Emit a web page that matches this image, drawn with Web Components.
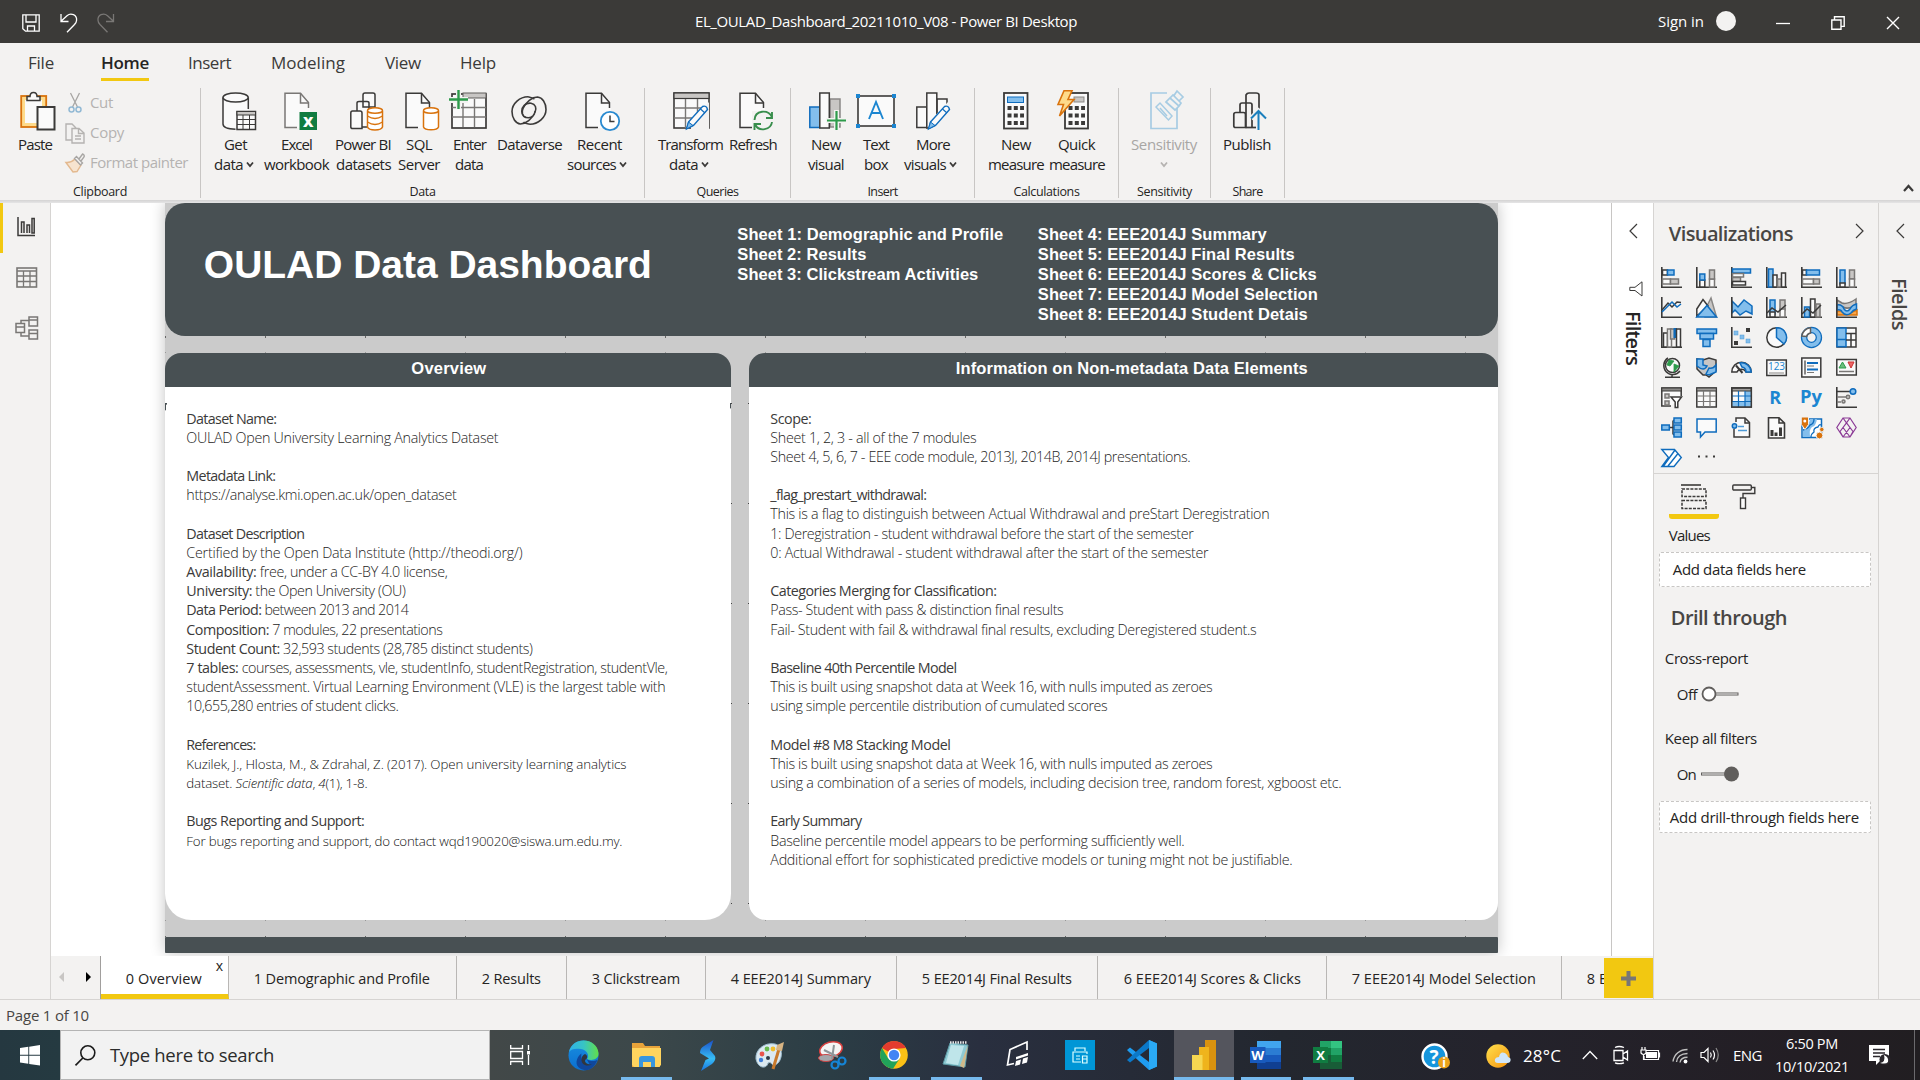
<!DOCTYPE html>
<html lang="en">
<head>
<meta charset="utf-8">
<title>EL_OULAD_Dashboard_20211010_V08 - Power BI Desktop</title>
<style>
html,body{margin:0;padding:0}
body{width:1920px;height:1080px;overflow:hidden;background:#f3f2f1;font:15px "Open Sans","Noto Sans",sans-serif;font-stretch:93%;color:#252423}
</style>
</head>
<body>
<power-bi-window></power-bi-window>
<script>
const K='#3b3a39',B='#83beec',S='#0f6cbd',G='#c8c6c4',W='#fafafa',O='#d9730d';
const r=(x,y,w,h,f='none',s='none',sw=1.5)=>`<rect x="${x}" y="${y}" width="${w}" height="${h}" fill="${f}" stroke="${s}" stroke-width="${sw}"/>`;
const p=(d,s=K,f='none',sw=1.5)=>`<path d="${d}" stroke="${s}" fill="${f}" stroke-width="${sw}"/>`;
const c=(x,y,q,f='none',s='none',sw=1.5)=>`<circle cx="${x}" cy="${y}" r="${q}" fill="${f}" stroke="${s}" stroke-width="${sw}"/>`;
const ax=p('M.8 0V20.2H21',K,'none',1.6);
const doc=(s=K)=>p('M1 1H17L26 10V36H1Z','none',W)+p('M24.5 16V10.5L16.5 1.2H1V35.5H13',s)+p('M16.5 1.2V11H25',s);
const pencil=(x,y)=>`<g transform="translate(${x} ${y})">`+p('M3 17L17 1.5Q21 0 22 4.5L8 20.5L1 24Z',S,W,1.4)+p('M3 17L7.5 20.5L1 24Z',S,B,1)+p('M15 4L19.5 8',S,'none',1.2)+'</g>';
/* glyph name -> [width, height, markup] */
const ICONS={
save:[18,18,p('M.8.8H17.2V17.2H3.5L.8 14.8ZM4 1V8H14V1M5.5 17V12H12.5V17','#fff','none',1.3)],
undo:[18,20,p('M1 1V8.5H8.5M1 8.3L7 2.7C11-.8 17 2 16.6 7.2C16.5 9 15.8 10 14.5 11.5L7 19.3','#fff','none',1.3)],
redo:[18,20,p('M16.5 1V8.5H9M16.5 8.3L10.5 2.7C6.500-.8.5 2 1 7.2C1 9 1.700 10 3 11.500L10.500 19.300','#797775','none',1.3)],
min:[14,14,p('M0 7.5H14','#fff','none',1.3)],
restore:[14,14,p('M.8 4H10V13.2H.8ZM3.5 3.800V.8H13.2V10.400H10.200','#fff','none',1.4)],
close:[14,14,p('M1 1L13 13M13 1L1 13','#fff','none',1.4)],
paste:[36,40,r(1.2,5,25,31,'#fedb8b',O,1.8)+r(5,9,17,23,W)+p('M7 9.500V5.500H10C10 0 17 0 17 5.500H20V9.500Z',K,W)+r(17.500,16,17,22.500,W,K,2)],
cut:[14,20,p('M2.500 0L9.500 14M11.500 0L4.500 14','#a8a6a4','none',1.300)+c(3.500,16.500,2.500,'none','#92b9d4',1.500)+c(10.500,16.500,2.500,'none','#92b9d4',1.500)],
copy:[20,21,p('M7 17H1V1H7L11 5M7 20V5.500H14L19 10V20ZM13.500 5.500V10.500H19M10 13H16M10 16H16','#b5b3b1','none',1.400)],
brush:[20,20,p('M10 6L16 12L12 18.500L8 19L1 9.500Q6 10 10 6Z','#e3b98f','#f7e4cf',1.400)+p('M9.500 5.500L11.500 3.500L17.500 10L15.500 12ZM14 6L17.500 1Q20 2 19 4L16 8','#a8a6a4','#f3f2f1',1.400)],
getdata:[35,39,p('M1 5.500V33C2 35.500 7 37.500 13.500 37.500L26 33V5.500Z','none',W)+p('M13.500 37.200C6 37 1 35 1 32V5.500M26.300 5.500V17')+`<ellipse cx="13.600" cy="5.500" rx="12.600" ry="4.500" fill="${W}" stroke="${K}" stroke-width="1.500"/>`+r(15,19.500,18.500,18,W,K)+r(15,19.500,18.500,3.500,G,K,1)+p('M15 27.500H33M15 32.500H33M21 23V37M27.500 23V37',K,'none',1)],
excel:[34,39,doc('#797775')+r(15.500,20,17.500,18,'#107c41')+`<text x="24.200" y="34.500" font-size="14.500" font-weight="800" fill="#fff" text-anchor="middle">X</text>`],
pbids:[34,39,p('M13 9.500V3Q13 1 15 1H23Q25 1 25 3V15H13ZM7 19V11Q7 9.500 9 9.500H17Q19 9.500 19 11V35H7Z',K,W)+p('M.8 21Q.8 19 2.500 19H10Q12 19 12 21V36.500H2.500Q.8 36.500 .8 35Z',K,W)+p('M17.500 19V35C19 39 31 39 32.500 35V19',O,'#fff')+`<ellipse cx="25" cy="18.500" rx="7.500" ry="2.800" fill="#fff" stroke="${O}" stroke-width="1.500"/>`+p('M17.500 24Q25 29 32.500 24M17.500 30Q25 35 32.500 30',O)],
sql:[35,39,doc()+p('M18.500 19V35C20 38.800 32 38.800 33.500 35V19',O,'#fff')+`<ellipse cx="26" cy="18.500" rx="7.500" ry="2.800" fill="#fff" stroke="${O}" stroke-width="1.500"/>`],
enter:[38,40,r(3,4,34,34,W,K,1.700)+r(14,3,23,5,G,'#605e5c',1)+p('M3 17.500H37M3 27H37M14 12V37M25.500 9V37','#797775','none',1.400)+r(0,7,19,6,'#f3f2f1')+r(7,0,5,19,'#f3f2f1')+p('M9.500 0V19M0 9.500H19','#2d9b4b','none',2.400)],
dataverse:[36,29,p('M17 .8C9 .8 1 7.500 1 15.500C1 22 4.500 27.500 9.500 28C15 28 21 23 24 16.500C26 12 24.500 8 20 7.200C14.500 6.500 10.500 11 10.800 15.500C11 19.500 14 21.800 17.500 21.800C21 21.800 24 19 24 15','#3b3a39','none',1.600)+p('M19 28.200C27 28.200 35 21.500 35 13.500C35 7 31.500 1.500 26.500 1C21 1 15 6 12 12.500C10.500 16 11 20.500 15 21.600M17 .8Q22 2 23.500 3M19 28.200Q14 27.500 12.500 26',K,'none',1.600)],
recent:[35,39,doc()+c(25,29,9.200,'#fff','#2a8ad0',1.800)+p('M25 23.500V29.500H29.500')],
transform:[39,39,r(1,1,35,35,W,K,1.600)+r(1,1,35,5.500,G,K,1.200)+p('M1 16H36M1 26H26M12.500 7V36M24.500 7V29','#797775','none',1.400)+p('M18 38L18 30L36 10V38Z','none','#f3f2f1')+pencil(12.500,13)],
refresh:[35,39,doc()+r(13,19,22,20,'#f3f2f1')+p('M15.500 28C16 18 29 17 33 25M33 20V26H27M33 30C32 38 20 40 16.500 33M15.500 38V32H22','#388e4c','none',1.900)],
newvis:[38,39,r(.8,15,10,20.500,B,S)+r(21,7,10,28,G,'#8a8886')+r(10.800,1,9.500,35,W,K)+r(17,26,19,5,'#f3f2f1')+r(25,18,5,20,'#f3f2f1')+p('M18 28.500H37M27.500 19V38','#2d9b4b','none',2.200)],
textbox:[40,34,r(2,2,36,30,W,K,1.600)+r(0,0,4,4,'#1c86d1')+r(36,0,4,4,'#1c86d1')+r(0,30,4,4,'#1c86d1')+r(36,30,4,4,'#1c86d1')+p('M13 25L20 8L27 25M15.500 19H24.500','#1c86d1','none',1.900)],
morevis:[38,39,r(.8,15,10,20.500,W,K)+r(21,7,10,28,W,K)+r(10.800,1,10,35,W,K)+p('M13 38V30L32 10H38V38Z','none','#f3f2f1')+pencil(11.500,13)],
calc:[26,38,r(1,1,23.500,35.500,W,K,1.800)+r(4.500,5,16,5.500,B,S,1)+p('M4.500 16H21M4.500 23.500H21M4.500 31H21',K,'none',4).replace('/>',' stroke-dasharray="4 2.300"/>')],
quick:[33,40,r(8,3,23,35.500,W,K,1.800)+r(17,7,10,5,G,'#8a8886',1)+p('M11.500 18H28M11.500 25.500H28M11.500 33H28',K,'none',4).replace('/>',' stroke-dasharray="4 2.300"/>')+p('M7 .8H15L11 9.500H17L2.500 26L6.500 14.500H1Z',O,'#fedb8b',1.600)],
sens:[35,40,p('M17 3H1V38.500H27V18','#a7cce3','none',1.700)+p('M16 12L25 20L29 16L20 8ZM20 8L23 5L31 13L29 16M24 5.500L27 1L33 7L29 11','#a7cce3','none',1.700)+p('M6 17L10 13L22 26L18.500 30ZM10 18L17 26','#a7cce3','none',1.500)],
publish:[34,39,p('M13 35V3Q14 1 16 1H23Q26 1 26 3V20M7 20V13Q7 11 9 11H17Q19 11 19 13V35M.8 22.500Q.8 20.500 3 20.500H10.500Q12.500 20.500 12.500 22.500V35.500H2.500Q.8 35.500 .8 34Z',K,'none',1.700)+p('M12.500 35.500H24',K,'none',1.700)+p('M25.500 38V19M18 26.500L25.500 19L33 26.500','#f3f2f1','none',5)+p('M25.500 38V19M18 26.500L25.500 19L33 26.500','#1b7fbd','none',2)],
dn:[8,8,p('M1 2.500L4 6L7 2.500',K,'none',1.800)],dng:[8,8,p('M1 2.500L4 6L7 2.500','#b5b3b1','none',1.800)],up:[11,8,p('M1 7L5.500 2L10 7',K,'none',2.200)],
left:[9,16,p('M8 1L1 8L8 15',K,'none',1.200)],right:[9,16,p('M1 1L8 8L1 15',K,'none',1.200)],
funnel:[14,16,p('M13 .8V15L6 9.500H.8V6.300H6Z',K,'none',1)],
report:[18,20,p('M1 0V18.500H18M4.500 16V5H7V16M10 16V8H12.500V16M15 16V1.500H17.200V16Z',K,'none',1.500)],
table:[22,21,r(1,1,19.500,19,'none','#797775',1.600)+p('M1 4H20M1 9H20M1 14.500H20M7.500 4V20M14 4V20','#797775','none',1.300)],
model:[24,24,p('M1 7.500H9.500V16.500H1ZM1 11H9.500M14 1H22.500V10H14ZM14 4H22.500M14 14H22.500V23H14ZM14 17.500H22.500M6 7V4.500H14M6 17V20H14','#797775','none',1.500)],
v0:[21,21,ax+r(1.500,3,5,5,W,K)+r(6.500,3,6.500,5,B,S)+r(1.500,12,8,5,W,'#797775')+r(9.500,12,8,5,G,'#797775')],
v1:[21,21,ax+r(3.800,13,5,7,W,K)+r(3.800,7,5,6,B,S)+r(13.500,12,5,8,W,'#797775')+r(13.500,3,5,9,G,'#797775')],
v2:[21,21,ax+r(1.500,2,18,4,B,S)+r(1.500,6.500,11,3.500,W,'#797775')+r(1.500,10.500,8,4,G,'#797775')+r(1.500,14.500,13,3.500,W,K)],
v3:[21,21,ax+r(2.500,2,4.500,18,B,S)+r(7,8,4,12,W,K)+r(11.500,12,4,8,G,'#797775')+r(15.500,6,4,14,W,K)],
v4:[21,21,ax+r(1.500,3,4,5,W,K)+r(5.500,3,13,5,B,S)+r(1.500,12,11,5,W,'#797775')+r(12.500,12,6,5,G,'#797775')],
v5:[21,21,ax+r(4,3,5,14,B,S)+r(4,16,5,4,W,K)+r(13.500,3,5,9,G,'#797775')+r(13.500,12,5,8,W,'#797775')],
v6:[21,21,ax+p('M1 13L7 6L11 10L16 5L20 5.500',K)+p('M1 15L11 5L16 10L20 7',S)],
v7:[21,21,p('M9 13L15 1L20.500 20H9Z','#8a8886',G)+p('M.8 12L7 2.500L12 9L.8 19Z',K,W)+p('M.8 20L11 8.500L20.500 20Z',S,B)],
v8:[21,21,p('M1 4L7 10L13 3L21 9V17L15 14L9 18L4 13L1 16Z',S,B)+ax],
v9:[21,21,ax+r(4,3,5,14,B,S)+r(4,15,5,5,W,K)+r(14,3,5,10,G,'#797775')+r(14,12,5,8,W,'#797775')+p('M1 16L6 11L12 15L20 8',K)],
v10:[21,21,ax+r(3.500,10,5,10,B,S)+r(9.500,2,4.500,18,W,K)+r(15,7,4,13,G,'#797775')+p('M1 17L6 12L12 16L20 8',K)],
v11:[21,21,p('M1 14H6Q11 18 21 13V18H1Z',O,'#f7a54a')+p('M1 3L6 6Q11 8 20 2V8Q12 13 7 10L1 9Z','#797775',G)+p('M1 8Q6 7 8 12Q11 16 14 12Q16 8 20.500 7V12Q17 13 15 16Q10 20 6 15Q5 12 1 13Z',S,B)+ax],
v12:[21,21,ax+r(2.500,6,4,14,W,K)+r(6.500,2,4,18,W,'#797775')+r(9.500,2,4,10,G,'#797775')+r(12.500,1,3.500,10,'#0f6cbd')+r(15.500,2,4,18,W,K)],
v13:[21,21,r(1,2,19.500,4.500,B,S)+r(4,6.500,13.500,5.500,B,S)+r(7,12.500,7,7,B,S)],
v14:[21,21,ax+r(15,1,4,4,K)+r(3,4,4,4,B,'#4d9ad6',.5)+r(9,8,4,4,B,'#4d9ad6',.5)+r(15,12,4,4,B,'#4d9ad6',.5)+r(3,14,4,4,K)],
v15:[21,21,c(10.500,10.500,9.700,W,K)+p('M10.500 .8A9.700 9.700 0 0 1 18 17L10.500 10.500Z',S,B)],
v16:[21,21,c(10.500,10.500,7.400,'none',S,6.500)+c(10.500,10.500,7.400,'none',B,4)+p('M.8 9A9.500 9.500 0 0 1 9.500.8V6A5 5 0 0 0 5.500 9.500Z','#605e5c','#fff')],
v17:[21,21,r(1,1,19,19,W,K)+r(1,1,9,18.700,B,S)+p('M1 12.500H10',S)+p('M10 6.500H20M15 6.500V20M10 13H20')],
v18:[21,21,c(11.500,8.500,7,W,K)+p('M8 3L13 4L9 9L6 8ZM13 7L18 9L13 15Z','#2d9b4b','#2d9b4b',.8)+p('M7 1A9 9 0 1 0 19 14M11 17V20M4 20.200H19',K)],
v19:[21,21,p('M1 2L7 3L13 1L20 3V14L13 20L10 18H7L1 12Z',K,G)+p('M1 2H7V8L11 9Q8 15 1 9ZM13 11Q17 12 20 8V15L13 18L10 17Z',S,B)],
v20:[21,21,p('M.8 15A9.700 9.700 0 0 1 20.200 15H15A5 5 0 0 0 6 15Z',K,W)+p('M9 6A9.700 9.700 0 0 1 20.200 15H15A5 5 0 0 0 11 10Z',S,B)+p('M5 8.500L11.500 16',K,'none',2)],
v21:[21,21,r(.8,3,19.500,15.500,W,K)+`<text x="10.500" y="13.300" font-size="10" fill="#1c86d1" text-anchor="middle">123</text>`+p('M3 16H18','#8a8886','none',1)],
v22:[21,21,r(.8,1,19,19,W,K)+p('M4 3.500V17.500',K,'none',1.200)+p('M6 6H17M6 12.500H17',S,'none',2)+p('M6 9H13M6 15.500H13','#797775','none',1)],
v23:[21,21,r(.8,2.500,19.500,15.500,W,K)+p('M3 11L6.500 5L10 11Z','#2d9b4b','#6abd7c',1)+p('M12 5H18L15 11Z','#c93232','#e66',1)+p('M3 14.500H18','#797775')],
v24:[21,21,p('M10 19H.8V1H20.200V9',K,W)+r(.8,1,19.500,3,'#8a8886',K,1)+r(4,7,4,4,G,'#797775')+r(4,14,4,4,G,'#797775')+p('M10 10H20.500L16.800 15V20.500H14.200V15Z',K,'#fff')],
v25:[21,21,r(.8,1,19.500,19,W,K)+r(.8,1,19.500,3,'#a19f9d',K,1)+p('M1 9H20M1 14.500H20M7.500 4V20M14 4V20','#797775','none',1.200)],
v26:[21,21,r(.8,1,19.500,19,W,K)+p('M14 4H20V20H1V14.500H14Z','none',B)+r(.8,1,19.500,3,'#a19f9d',K,1)+p('M1 9H20M1 14.500H20M7.500 4V20M14 4V20',S,'none',1.200)+r(.8,1,19.500,19,'none',K)],
v27:[21,21,`<text x="9.300" y="17" font-size="18" font-weight="700" fill="#1c86d1" text-anchor="middle">R</text>`],
v28:[24,21,`<text x="10" y="15.500" font-size="18.500" font-weight="700" fill="#1c86d1" text-anchor="middle" textLength="22" lengthAdjust="spacingAndGlyphs">Py</text>`],
v29:[21,21,ax+p('M1 4.500H14',K)+c(17,4.500,2.800,B,S)+p('M1 10H10M1 15H5','#797775')+c(12,10,1.700,G,'#797775')+c(7.500,14.500,1.500,G,'#797775')],
v30:[21,21,p('M8 10.500H12M12 3.500V17.500M12 3.500H14M12 17.500H14M12 10.500H14',K)+r(.8,8,7.500,5,B,S)+r(13,1,7.300,5,B,S)+r(13,8,7.300,5,B,S)+r(13,15,7.300,5,B,S)],
v31:[21,21,p('M1 2H20.200V15H9L4.500 20V15H1Z',S,W)],
v32:[21,21,p('M5 5V1H14L18.500 5.500V20H3V12',K,W)+p('M14 1V6H18',K)+c(3.500,9,2.200,B,S)+p('M7 9.500H13M7 13.500H16','#4d9ad6')],
v33:[21,21,p('M2.500 .8H13L18.500 6V21H2.500ZM13 .8V6H18.500',K,W,1.600)+p('M6 19V13M10 19V15.500M14.500 19V10.500',K,'none',3)],
v34:[22,22,r(1,2,19.500,18.500,'#fff',S)+p('M9 2H16Q15 9 11 10Q8 12 9 20H2V13Q8 8 9 2Z','none',B)+p('M20 8Q18 7 17 10Q12 11 13 15Q10 17 10 20M13 2Q13 7 9 8Q7 12 2 13',S,'none',1.300)+p('M.3 0H7.500V7.500L4 12.500L.3 7.500Z','#f3f2f1',O,1)+c(3.800,4,1.500,'#fff')+c(18.500,18.500,3.400,O,'#f3f2f1',1)+c(20.800,12.500,2.200,O,'#f3f2f1',.8)],
v35:[21,21,p('M7 1H14L20.200 10.500L14 20H7L.8 10.500ZM10.500 5.800L14 1M10.500 5.800L7 1M10.500 5.800L4 14.500M10.500 5.800L17 14.500M4 14.500L7 20M14 20L17 14.500M7 10.500L14 20M14 10.500L7 20','#8b3a96','none',1.200)],
v36:[21,21,p('M.8 2.500H13.500L20.300 10.500L13 19.500H.8L7.500 10.500ZM7 19L17 6.500M2.500 19L14 3',S,'#fff',1.400)],
v37:[21,21,r(2,8.500,2,2,K)+r(9.500,8.500,2,2,K)+r(17,8.500,2,2,K)],
fieldwell:[26,26,p('M0 1H20',K,'none',1.600)+`<g stroke-dasharray="3 1.200">`+r(1,5,24,7.500,'none',K,1.500)+r(1,16.500,24,8,'none',K,1.500)+'</g>'],
roller:[24,26,`<rect x=".8" y="1" width="18.500" height="5" rx="1" fill="none" stroke="${K}" stroke-width="1.400"/>`+p('M19.500 3.500H22.800V9.500H11V14',K,'none',1.400)+r(8.500,14,5,10.500,W,K,1.400)],
off:[38,16,r(14,7,23,2,'#fff','#605e5c',1)+c(8,8,6.500,'#fff','#605e5c',1.800)],
on:[38,16,r(.5,7,24,2,'#fff','#605e5c',1)+c(30.500,8,7.500,'#605e5c')],
pl:[6,12,p('M6 1V11L1 6Z','none','#c8c6c4')],pr:[6,12,p('M0 1V11L5 6Z','none','#000')],
plus:[15,15,p('M7.500 0V15M0 7.500H15','#797775','none',4)],
start:[20,21,p('M0 3L8.300 1.800V9.800H0ZM9.200 1.700L20 0V9.800H9.200ZM0 10.700H8.300V18.800L0 17.600ZM9.200 10.700H20V20.500L9.200 18.900Z','none','#fff')],
search:[21,21,c(12.800,7.800,7,'none','#1b1b1b',1.600)+p('M7.800 13L.5 20.300','#1b1b1b','none',1.700)],
taskview:[20,20,p('M.7 0V3.500H12.500V0M.7 20V16.500H12.500V20M.7 6.500H12.500V13.500H.7ZM18.500 0V5M18.500 10V20','#fff','none',1.300)+r(17,6,3,3.500,'#fff')],
edge:[31,31,`<defs><linearGradient id="a" x2="1"><stop stop-color="#2fb0e8"/><stop offset=".5" stop-color="#38c4c4"/><stop offset="1" stop-color="#62e048"/></linearGradient><linearGradient id="b" y2="1" x2="0"><stop stop-color="#1a8fe0"/><stop offset="1" stop-color="#0a6fd0"/></linearGradient></defs>`+c(15.500,15.500,15,'url(#b)')+p('M1 12C4-4 29-3 30.500 13C31 20 23 21 19 19C22 16 19 10 13 9C7 8 3 9 1 12Z','none','url(#a)')+p('M18.500 19C22 22 27 21 29.500 20C26 29 19 32 13 29C6 26 8 17 13.500 13.500C12.500 18 14 25 22 25Z','none','#10479c')+p('M18.500 19C15.500 20 17 25 24 24.500C18 27.500 13 24 13.500 19C13.800 17 14.500 15 17 14C19.500 15 19.500 17 18.500 19Z','none','#30363f')],
folder:[31,26,p('M1 1H12L14 4H29V25H1Z','none','#e8a33a')+p('M1 6H30V23L28 25H3L1 23Z','none','#ffd45e')+p('M8 25V17Q8 14 11 14H21Q24 14 24 17V25H20V20H12V25Z','none','#3896de')],
sicon:[16,31,`<defs><linearGradient id="s" x2="0" y2="1"><stop stop-color="#1b50c8"/><stop offset=".6" stop-color="#37bdf5"/><stop offset="1" stop-color="#1872e0"/></linearGradient></defs>`+p('M13.500 0L10 10L15 16Q16.500 20 12 24L1 31L5.500 20L9 18.500L0 13Q0 8 4 6Z','none','url(#s)')],
paint:[30,30,p('M1 18C0 9 9 1 20 3C29 5 28 21 20 24C16 25 17 20 13 22C12 28 3 28 1 18Z','#9dbdd0','#dbe9f1',1)+c(7,13,2.400,'#e9534d')+c(12,8,2.400,'#67b94e')+c(18,8,2.400,'#f0be2e')+c(6,19,2.200,'#3f7dd6')+c(13,17,2,'#2f3a48')+p('M24 8L18 28','#c97a2c','none',3)+p('M21 9L22 4L29 1L27 10Z','none','#d8b483')],
snip:[28,29,`<ellipse cx="13" cy="8.500" rx="11.500" ry="7.500" fill="#f4f4f4" stroke="#d8403f" stroke-width="1.500" transform="rotate(-15 13 8.500)"/>`+`<ellipse cx="8" cy="17" rx="7.500" ry="3.500" fill="#a4a7ab" stroke="#c94444"/>`+p('M6 9L20 16M16 4L14 18','#8f9599','none',2)+c(17,24,3.500,'none','#1584d6',2.200)+c(24,20,3.500,'none','#1584d6',2.200)],
chrome:[28,28,c(14,14,13.800,'#fbc116')+p('M14 14L2 7A13.800 13.800 0 0 1 26 7L14 8Z','none','#e33b2e')+p('M2 7A13.800 13.800 0 0 0 13 27.800L20 17L8 17Z','none','#21a35a')+c(14,14,6.600,'#fff')+c(14,14,5.200,'#4285f4')],
notepad:[28,28,p('M8 2L26 4L23 26L1 23Z','#5b98a3','#8ecad3',1)+p('M9 4L22 5L16 24L4 22Z','none','#bfe5ea')+p('M26 4L22 27L18 25Z','none','#d0b98a')+p('M8 1.500H25','#e5e5e5','none',2.500).replace('/>',' stroke-dasharray="1.500 1"/>')],
quad:[24,28,p('M21 10V2L4 9.500L1.500 25L8 23.500','#fff','none',1.700)+p('M10 17L22 13V15.500L10 19.500ZM10 21L15 19.500L14 24.500L9 26ZM17 18.500L22 17L21 22.500L16 24Z','none','#fff')],
hp:[30,30,r(0,0,30,30,'#0096d6')+p('M10 11V8H20V11M16 22H8V12H22V14M11 16H15M11 19H15M17.500 16H22V23H17.500ZM17.500 19H22','#dff','none',1.200)],
vscode:[30,30,p('M22 0L30 3.500V26.500L22 30L2 12L0 10L3 7.500L22 22Z','none','#1f9cf0')+p('M22 0L0 20L3 22.500L22 8Z','none','#0b78c8')+p('M22 0L30 3.500V26.500L22 30Z','none','#2aa9f4')],
pbi:[24,30,r(13,0,11,30,'#d9920f')+r(7,7,10,23,'#efb41c')+r(0,15,10.500,15,'#f6d751')],
word:[31,28,r(7,0,24,28,'#185abd')+r(7,0,24,7,'#41a5ee')+r(7,7,24,7,'#2b7cd3')+r(7,21,24,7,'#103f91')+r(0,6,15.500,16,'#185abd')+`<text x="7.800" y="19" font-size="13" font-weight="700" fill="#fff" text-anchor="middle" textLength="13" lengthAdjust="spacingAndGlyphs">W</text>`],
excelt:[30,28,r(7,0,22,28,'#21a366')+r(18,0,11,7,'#33c481')+r(7,7,11,7,'#107c41')+r(18,14,11,7,'#107c41')+r(7,14,11,14,'#185c37')+r(18,21,11,7,'#185c37')+r(0,6,15,16,'#107c41')+`<text x="7.500" y="19" font-size="13" font-weight="700" fill="#fff" text-anchor="middle">X</text>`],
help:[29,28,c(13.500,13.500,12,'#1595dc','#fff',2.400)+`<text x="13" y="20.500" font-size="19" font-weight="700" fill="#fff" text-anchor="middle">?</text>`+c(23,19.500,6,'#eda31a')+`<text x="23" y="24" font-size="12" font-weight="700" fill="#fff" text-anchor="middle">i</text>`],
weather:[26,24,`<defs><linearGradient id="w" x2="1" y2="1"><stop stop-color="#ffe14d"/><stop offset="1" stop-color="#f5930f"/></linearGradient></defs>`+c(12,12,11.700,'url(#w)')+p('M12 19Q8 19 9 15Q10 13 13 13Q14 7 19 9Q22 11 22 13Q26 14 24 18Q23 19 21 19Z','none','#cfe6fa')],
tup:[16,10,p('M.8 9L8 1.500L15.200 9','#fff','none',1.300)],
meet:[16,18,p('M1 4.500H10V14.500H1ZM10 8L14.500 5V14L10 11M2 1.500Q6-.5 11 1.500M2 16.800Q6 18.500 11 16.800','#fff','none',1.300)],
bat:[20,14,p('M6 3.500H18.500V12.500H4V9M18.500 6H19.500V10H18.500','#fff','none',1.200)+r(6,5,11,6,'#fff')+p('M1 3H6V6Q3.500 9 1 6ZM2 0V3M5 0V3M3.500 7V13','#fff','none',1.200)],
wifi:[17,16,p('M1 13.500C2 6 8 1.500 15.500 1.500M4.500 14C5 9 9 5.500 15.500 5.500M8 14.500C8.500 11 11 9.300 15.500 9.300','#c0c0c0','none',1.400)+c(13.500,13.500,1.900,'#fff')],
vol:[20,16,p('M1 5.500H4L8 1.500V14.500L4 10.500H1ZM10.500 5.500Q12 8 10.500 10.500M13 3.500Q16 8 13 12.500','#fff','none',1.200)+p('M16 1Q20.500 8 16 15','#8a8a8a','none',1.200)],
notif:[21,20,p('M0 0H20V16H11L7 20V16H0Z','none','#fff')+p('M4 4.500H16M4 8H16M4 11.500H11','#2a262b','none',1.300)+c(16,14.500,5.500,'#2a262b')+p('M15 10Q20 12 19 17Q17 19.500 11 18Q17 17 15 10Z','none','#fff')],
};
const place=(items,start=0)=>{let at=start;return items.map(([x,w,html,css=''])=>{const m=x-at;at=x+w;return `<div style="flex:none;margin-left:${m}px;width:${w}px;${css}">${html}</div>`}).join('')};
const ic=(n,css='')=>`<app-icon name="${n}"${css?` style="${css}"`:''}></app-icon>`;
const ft=(w,t,css='')=>`<fit-text w="${w}"${css?` style="${css}"`:''}>${t}</fit-text>`;
const el=(tag,tpl)=>customElements.define(tag,class extends HTMLElement{
  connectedCallback(){if(this.shadowRoot)return;this.attachShadow({mode:'open'}).innerHTML=typeof tpl==='function'?tpl(this):tpl}
});

el('power-bi-window',`<style>:host{display:flex;flex-direction:column;width:1920px;height:1080px}
.mid{display:flex;height:797px;border-bottom:1px solid #d6d4d2;box-sizing:border-box}
.work{display:flex;flex-direction:column;width:1602px}.top{display:flex;height:753px}
.status{height:30px;line-height:30px;padding-left:6px;color:#484644;box-sizing:border-box}</style>
<title-bar></title-bar><ribbon-bar></ribbon-bar>
<div class="mid"><view-rail></view-rail><div class="work"><div class="top"><report-canvas></report-canvas><filters-pane></filters-pane></div><page-tabs></page-tabs></div><viz-pane></viz-pane><fields-pane></fields-pane></div>
<div class="status">${ft(83,'Page 1 of 10')}</div><task-bar></task-bar>`);

el('title-bar',`<style>:host{display:flex;align-items:flex-start;height:43px;background:#3b3a38;color:#fff;line-height:43px}</style>`+
place([[22,18,ic('save','margin-top:14px')],[60,18,ic('undo','margin-top:13px')],[97,18,ic('redo','margin-top:13px')],[695,382,ft(382,'EL_OULAD_Dashboard_20211010_V08 - Power BI Desktop')],[1658,47,ft(46,'Sign in')],[1716,20,'','height:20px;margin-top:11px;border-radius:50%;background:#f3f2f1'],[1776,14,ic('min','margin-top:16px')],[1831,14,ic('restore','margin-top:16px')],[1886,14,ic('close','margin-top:16px')]]));

const btn=(x,w,icon,ix,iy,lines)=>[x,w,`<div style="display:flow-root;height:46px">${ic(icon,`margin-left:${ix-x}px;margin-top:${iy-88}px`)}</div>`+lines.map(([t,lx,lw,ch])=>`<div class="ln" style="padding-left:${lx-x}px">${t?ft(lw,t):''}${ch?ic(ch,`margin-left:${t?3:0}px`):''}</div>`).join('')];
el('ribbon-bar',()=>{
const g=(x,w,label,lw,btns,grey)=>`<div class="g" style="width:${w}px"><div class="b${grey?' grey':''}">${place(btns,x)}</div><div class="l">${ft(lw,label)}</div></div>`;
return `<style>:host{display:block;height:160px;background:linear-gradient(#f3f2f1 157px,#d4d3d3 157px,#e5e5e6 160px);position:relative;z-index:2}
.tabs{display:flex;height:45px;line-height:39px;font-size:17px;color:#3b3a39}
.groups{display:flex;height:110px}.g{border-right:1px solid #c8c6c4;box-sizing:border-box;display:flex;flex-direction:column}.b{display:flex;height:98px}.l{height:12px;line-height:12px;font-size:12.500px;text-align:center}
.ln{display:flex;align-items:center;height:20px;line-height:20px;white-space:nowrap}.grey{color:#a8a6a4}
.s{display:flex;align-items:center;height:30px;color:#b5b3b1;gap:5px;line-height:20px}.s fit-text{margin-bottom:2px}.s span{display:flex;justify-content:center;width:20px}
</style><div class="tabs">${place([[28,27,ft(26,'File')],[101,48,ft(48,'Home'),'height:35px;border-bottom:3px solid #f2c811;font-weight:600;color:#252423'],[188,44,ft(43,'Insert')],[271,75,ft(74,'Modeling')],[385,37,ft(36,'View')],[460,37,ft(36,'Help')]])}</div>
<div class="groups">`+
g(0,201,'Clipboard',54,[btn(18,37,'paste',20,91,[['Paste',18,34]]),[65,130,`<div class="s"><span>${ic('cut')}</span>${ft(23,'Cut')}</div><div class="s"><span>${ic('copy')}</span>${ft(34,'Copy')}</div><div class="s"><span>${ic('brush')}</span>${ft(98,'Format painter')}</div>`]])+
g(201,444,'Data',26,[btn(214,42,'getdata',222,92,[['Get',224,23],['data',214,29,'dn']]),btn(264,65,'excel',284,92,[['Excel',281,31],['workbook',264,65]]),btn(335,57,'pbids',350,92,[['Power BI',335,56],['datasets',336,55]]),btn(398,43,'sql',405,92,[['SQL',406,26],['Server',398,42]]),btn(449,39,'enter',449,90,[['Enter',453,33],['data',455,28]]),btn(497,66,'dataverse',511,96,[['Dataverse',497,65]]),btn(567,60,'recent',585,92,[['Recent',577,45],['sources',567,49,'dn']])])+
g(645,146,'Queries',42,[btn(658,65,'transform',673,92,[['Transform',658,65],['data',669,29,'dn']]),btn(729,48,'refresh',739,92,[['Refresh',729,48]])])+
g(791,184,'Insert',30,[btn(808,38,'newvis',809,92,[['New',811,30],['visual',808,36]]),btn(856,40,'textbox',856,94,[['Text',863,26],['box',864,24]]),btn(904,54,'morevis',916,92,[['More',916,34],['visuals',904,42,'dn']])])+
g(975,144,'Calculations',66,[btn(988,55,'calc',1003,92,[['New',1001,30],['measure',988,56]]),btn(1049,55,'quick',1057,90,[['Quick',1058,37],['measure',1049,56]])])+
g(1119,92,'Sensitivity',55,[btn(1131,66,'sens',1150,90,[['Sensitivity',1131,66],['',1160,0,'dng']])],1)+
g(1211,74,'Share',30,[btn(1223,47,'publish',1233,92,[['Publish',1223,48]])])+
`<div style="margin-left:618px;padding-top:96px">${ic('up')}</div></div>`});

el('view-rail',`<style>:host{display:flex;flex-direction:column;width:51px;box-sizing:border-box;border-right:1px solid #d6d4d2}.c{height:50px;display:flex;align-items:center;padding-left:12px;border-left:3px solid transparent;margin-bottom:-1px;box-sizing:border-box}.c.on{border-color:#f2c811;padding-left:14px}</style>
<div class="c on">${ic('report','margin-top:-2px')}</div><div class="c">${ic('table','margin-top:0;margin-left:1px')}</div><div class="c">${ic('model','margin-top:3px')}</div>`);

el('filters-pane',`<style>:host{display:flex;flex-direction:column;width:42px;box-sizing:border-box;border-left:1px solid #c8c6c4;background:#fff;font-size:20px;font-weight:600}</style>${ic('left','margin:20px 0 0 17px')}${ic('funnel','margin:42px 0 0 17px')}<fit-text w="54" v style="margin:14px 0 0 8px">Filters</fit-text>`);
el('fields-pane',`<style>:host{display:flex;flex-direction:column;width:41px;font-size:20px;font-weight:600;color:#484644}</style>${ic('left','margin:20px 0 0 17px')}<fit-text w="52" v style="margin:39px 0 0 7px">Fields</fit-text>`);

el('viz-pane',`<style>:host{display:block;width:227px;box-sizing:border-box;border-left:1px solid #d6d4d2;border-right:1px solid #d6d4d2}
h2{margin:0;font-size:20px;font-weight:600;color:#484644;line-height:28px}
.head{display:flex;justify-content:space-between;padding:17px 14px 0 15px;height:64px;box-sizing:border-box}
.grid{display:grid;grid-template-columns:repeat(6,35px);grid-auto-rows:30px;padding-left:7px;height:206px}
.tabs{display:flex;border-top:1px solid #d6d4d2;height:46px;box-sizing:border-box;padding-left:15px;margin-bottom:2px}.tabs div{width:50px;box-sizing:border-box;padding-top:10px}.on{border-bottom:5px solid #f2c811;border-radius:3px}
.lab{line-height:22px;padding-left:15px}.well{margin-left:5px;width:212px;box-sizing:border-box;border:1px dashed #c8c6c4;background:#fff;border-radius:2px}
.tg{display:flex;align-items:center;height:22px;padding-left:23px}.tg fit-text{width:24px}</style>
<div class="head"><h2>${ft(124,'Visualizations')}</h2>${ic('right','margin-top:3px')}</div>
<div class="grid">${Array.from({length:38},(_,i)=>ic('v'+i)).join('')}</div>
<div class="tabs"><div class="on">${ic('fieldwell','margin-left:12px')}</div><div>${ic('roller','margin-left:13px')}</div></div>
<div class="lab" style="padding-top:3px">${ft(41,'Values')}</div>
<div class="well" style="margin-top:6px;height:35px;line-height:33px;padding-left:13px">${ft(133,'Add data fields here')}</div>
<h2 style="padding:17px 0 0 17px">${ft(116,'Drill through')}</h2>
<div class="lab" style="padding:15px 0 0 11px">${ft(83,'Cross-report')}</div>
<div class="tg" style="margin-top:14px">${ft(20,'Off')}${ic('off')}</div>
<div class="lab" style="padding:22px 0 0 11px">${ft(92,'Keep all filters')}</div>
<div class="tg" style="margin-top:14px">${ft(19,'On')}${ic('on')}</div>
<div class="well" style="margin-top:16px;height:32px;line-height:31px;padding-left:10px">${ft(189,'Add drill-through fields here')}</div>`);

el('info-card',e=>`<style>:host{display:flex;flex-direction:column;width:${e.getAttribute('w')}px;height:567px}
header{height:34px;background:#485053;border-radius:16px 16px 0 0;color:#fff;text-align:center;font:bold 16.500px/31px "Liberation Sans",Arial,sans-serif;padding-left:${e.getAttribute('shift')}px}
.body{flex:1;background:#fff;border-radius:0 0 ${e.getAttribute('rad')}px ${e.getAttribute('rad')}px;padding:21.500px 0 0 ${e.getAttribute('pad')}px}
:host([notched]) .body{background:linear-gradient(100deg,#485053 45%,#fff 50%) 0 16px/2px 10px no-repeat,linear-gradient(260deg,#485053 45%,#fff 50%) 100% 16px/2px 6px no-repeat,#fff}</style>
<header>${ft(e.getAttribute('tw'),e.getAttribute('head'))}</header><div class="body"><slot></slot></div>`);
el('text-line',`<style>:host{display:block;height:19.200px;line-height:19.200px;font-size:14.300px;font-weight:300;white-space:nowrap;color:#252423}</style><slot></slot>`);
const lines=a=>a.map(([w,t,css])=>`<text-line>${w?ft(w,t,css||''):''}</text-line>`).join('');
const b=t=>`<span style="font-weight:500;color:#3b3a39">${t}</span>`;
const small='font-size:13.300px;font-weight:350;color:#111';
el('report-canvas',`<style>:host{display:block;width:1560px;background:#fff;overflow:hidden}
.page{margin-left:114px;width:1333px;height:750px;box-shadow:0 0 14px rgba(0,0,0,.24);background:#cbcbcb}
.row{display:flex}
.hd{height:133px;background:#485053;border-radius:20px;color:#fff;display:flex;align-items:flex-start;font-family:"Liberation Sans",Arial,sans-serif;font-weight:bold;font-size:16.500px;line-height:20px}
.gap{height:17px;background:linear-gradient(90deg,#666 1px,transparent 1px) 100px 0/100px 2px repeat-x,linear-gradient(90deg,#999 1px,transparent 1px) 100px 100%/100px 1px repeat-x}
.gap2{height:17px;background:linear-gradient(90deg,#999 1px,transparent 1px) 100px 0/100px 1px repeat-x,linear-gradient(90deg,#666 1px,transparent 1px) 100px 100%/100px 1px repeat-x}
.v{width:18px;background:linear-gradient(#444 1px,transparent 1px) 0 50px/1px 100px repeat-y,linear-gradient(#444 1px,transparent 1px) 100% 50px/1px 100px repeat-y}
.ft{height:16px;background:#485053;border-radius:1px}</style>
<div class="page"><div class="hd">`+place([[39,448,ft(448,'OULAD Data Dashboard','font-size:39px;line-height:44px'),'padding-top:40px'],
[572.5,268,[[266,'Sheet 1: Demographic and Profile'],[129,'Sheet 2: Results'],[241,'Sheet 3: Clickstream Activities']].map(a=>`<div>${ft(...a)}</div>`).join(''),'padding-top:21px'],
[873,290,[[229,'Sheet 4: EEE2014J Summary'],[257,'Sheet 5: EEE2014J Final Results'],[279,'Sheet 6: EEE2014J Scores &amp; Clicks'],[280,'Sheet 7: EEE2014J Model Selection'],[270,'Sheet 8: EEE2014J Student Detais']].map(a=>`<div>${ft(...a)}</div>`).join(''),'padding-top:21px']])+
`</div><div class="gap"></div><div class="row">
<info-card w="566" rad="26" pad="21.500" tw="75" shift="2" notched head="Overview">`+lines([[90,b('Dataset Name:')],[312,'OULAD Open University Learning Analytics Dataset'],[],[89,b('Metadata Link:')],[270,'https://analyse.kmi.open.ac.uk/open_dataset'],[],[118,b('Dataset Description')],[336,'Certified by the Open Data Institute (http://theodi.org/)'],[261,b('Availability:')+' free, under a CC-BY 4.0 license,'],[219,b('University:')+' the Open University (OU)'],[222,b('Data Period:')+' between 2013 and 2014'],[256,b('Composition:')+' 7 modules, 22 presentations'],[346,b('Student Count:')+' 32,593 students (28,785 distinct students)'],[481,b('7 tables:')+' courses, assessments, vle, studentInfo, studentRegistration, studentVle,'],[479,'studentAssessment. Virtual Learning Environment (VLE) is the largest table with'],[212,'10,655,280 entries of student clicks.'],[],[69,b('References:')],[440,'Kuzilek, J., Hlosta, M., &amp; Zdrahal, Z. (2017). Open university learning analytics',small],[181,'dataset. <i>Scientific data</i>, <i>4</i>(1), 1-8.',small],[],[178,b('Bugs Reporting and Support:')],[436,'For bugs reporting and support, do contact wqd190020@siswa.um.edu.my.',small]])+
`</info-card><div class="v"></div><info-card w="749" rad="17" pad="21.500" tw="352" shift="17" head="Information on Non-metadata Data Elements">`+lines([[41,b('Scope:')],[206,'Sheet 1, 2, 3 - all of the 7 modules'],[420,'Sheet 4, 5, 6, 7 - EEE code module, 2013J, 2014B, 2014J presentations.'],[],[156,b('_flag_prestart_withdrawal:')],[499,'This is a flag to distinguish between Actual Withdrawal and preStart Deregistration'],[423,'1: Deregistration - student withdrawal before the start of the semester'],[438,'0: Actual Withdrawal - student withdrawal after the start of the semester'],[],[226,b('Categories Merging for Classification:')],[293,'Pass- Student with pass &amp; distinction final results'],[486,'Fail- Student with fail &amp; withdrawal final results, excluding Deregistered student.s'],[],[186,b('Baseline 40th Percentile Model')],[442,'This is built using snapshot data at Week 16, with nulls imputed as zeroes'],[337,'using simple percentile distribution of cumulated scores'],[],[180,b('Model #8 M8 Stacking Model')],[442,'This is built using snapshot data at Week 16, with nulls imputed as zeroes'],[571,'using a combination of a series of models, including decision tree, random forest, xgboost etc.'],[],[91,b('Early Summary')],[414,'Baseline percentile model appears to be performing sufficiently well.'],[522,'Additional effort for sophisticated predictive models or tuning might not be justifiable.']])+
`</info-card></div><div class="gap2"></div><div class="ft"></div></div>`);

el('page-tabs',()=>{const T=[[101,128,25,76,'0 Overview'],[229,228,25,176,'1 Demographic and Profile'],[457,110,25,59,'2 Results'],[567,139,25,88,'3 Clickstream'],[706,191,25,140,'4 EEE2014J Summary'],[897,201,25,150,'5 EE2014J Final Results'],[1098,229,26,177,'6 EEE2014J Scores &amp; Clicks'],[1327,235,25,184,'7 EEE2014J Model Selection'],[1562,42,25,0,'8 E']];
return `<style>:host{display:flex;height:43px;background:#f3f2f1;font-size:14.500px}.nav{display:flex;width:50px;box-sizing:border-box;padding:15px 8px 0 7px;justify-content:space-between;border-right:1px solid #a19f9d}
.t{display:flex;line-height:46px;height:43px;box-sizing:border-box;border-right:1px solid #b9b7b5;white-space:nowrap;overflow:hidden}.t.last{border:0}.on{background:#fff;border-bottom:5px solid #f2c811;font-weight:500}
.x{line-height:20px;margin-left:14px;font-size:14px}.add{width:49px;height:40px;margin-top:2px;background:#f2c811;display:flex;align-items:center;justify-content:center}</style>
<div class="nav">${ic('pl')}${ic('pr')}</div>`+T.map(([x,w,pd,tw,t],i)=>`<div class="t${i?'':' on'}${tw?'':' last'}" style="width:${w}px;padding-left:${pd}px">${tw?ft(tw,t):`<span>${t}</span>`}${i?'':'<span class="x">x</span>'}</div>`).join('')+`<div class="add">${ic('plus')}</div>`});

el('task-bar',()=>{const I=(x,w,n,iw,top,run,act)=>[x,w,ic(n,`margin-left:${Math.floor((w-iw)/2)}px;margin-top:${top}px`),`display:flow-root;box-sizing:border-box;height:50px;${run?'border-bottom:3px solid #76b9ed;':''}${act?'background:#54555d;':''}`];
return `<style>:host{display:flex;height:50px;color:#fff;background:linear-gradient(90deg,#253840 0,#253a41 60px,#424848 490px,#3c484a 640px,#2b3d45 830px,#292f3f 980px,#23272f 1280px,#24232c 1500px,#231e24 1800px,#211e21)}
.s{display:flex;align-items:center;gap:14px;height:50px;padding-left:14px;background:#f2f2f2;border:1px solid #b4b4b4;box-sizing:border-box;color:#2b2b2b;font-size:18.500px}.s fit-text{margin-bottom:1px}.c{line-height:23px;font-size:14.500px;text-align:center;padding-top:2px}</style>`+
place([I(0,60,'start',20,15),[60,430,`<div class="s">${ic('search')}${ft(164,'Type here to search')}</div>`],I(500,40,'taskview',20,15),I(559,50,'edge',31,10),I(621,51,'folder',31,12,1),I(683,50,'sicon',16,10),I(745,50,'paint',30,11),I(807,50,'snip',28,11),I(869,51,'chrome',28,11,1),I(931,51,'notepad',28,11,1),I(993,50,'quad',24,10),I(1055,50,'hp',30,10),I(1117,50,'vscode',30,10),I(1174,60,'pbi',24,10,1,1),I(1241,50,'word',31,11,1),I(1303,51,'excelt',30,11,1),I(1411,50,'help',29,13),I(1484,30,'weather',26,14),[1523,38,ft(38,'28°C'),'line-height:51px;font-size:17px'],I(1582,16,'tup',16,20),I(1613,16,'meet',16,16),I(1640,20,'bat',20,17),I(1672,17,'wifi',17,18),I(1700,20,'vol',20,17),[1733,30,ft(29,'ENG'),'line-height:50px'],[1774,76,`<div class="c"><div>${ft(52,'6:50 PM')}</div><div>${ft(74,'10/10/2021')}</div></div>`],I(1869,21,'notif',21,15),[1914,1,'','background:#6b6a6d;height:50px']])});

el('app-icon',e=>{const [w,h,m]=ICONS[e.getAttribute('name')];return `<style>:host{display:block;flex:none;width:${w}px;height:${h}px}svg{display:block;overflow:visible}</style><svg width="${w}" height="${h}" viewBox="0 0 ${w} ${h}">${m}</svg>`});

/* Label that spreads its letters to occupy a set advance width. */
customElements.define('fit-text',class extends HTMLElement{
  connectedCallback(){
    if(this.shadowRoot)return;
    const v=this.hasAttribute('v');
    this.attachShadow({mode:'open'}).innerHTML=`<style>:host{display:inline-block;white-space:pre;flex:none}span{display:inline-block;${v?'writing-mode:vertical-rl;line-height:26px;':''}}</style><span><slot></slot></span>`;
    const s=this.shadowRoot.querySelector('span'),q=s.getBoundingClientRect();
    const n=this.textContent.length,d=(+this.getAttribute('w')-(v?q.height:q.width))/n;
    s.style.letterSpacing=d.toFixed(4)+'px';
  }
});
</script>
</body>
</html>
